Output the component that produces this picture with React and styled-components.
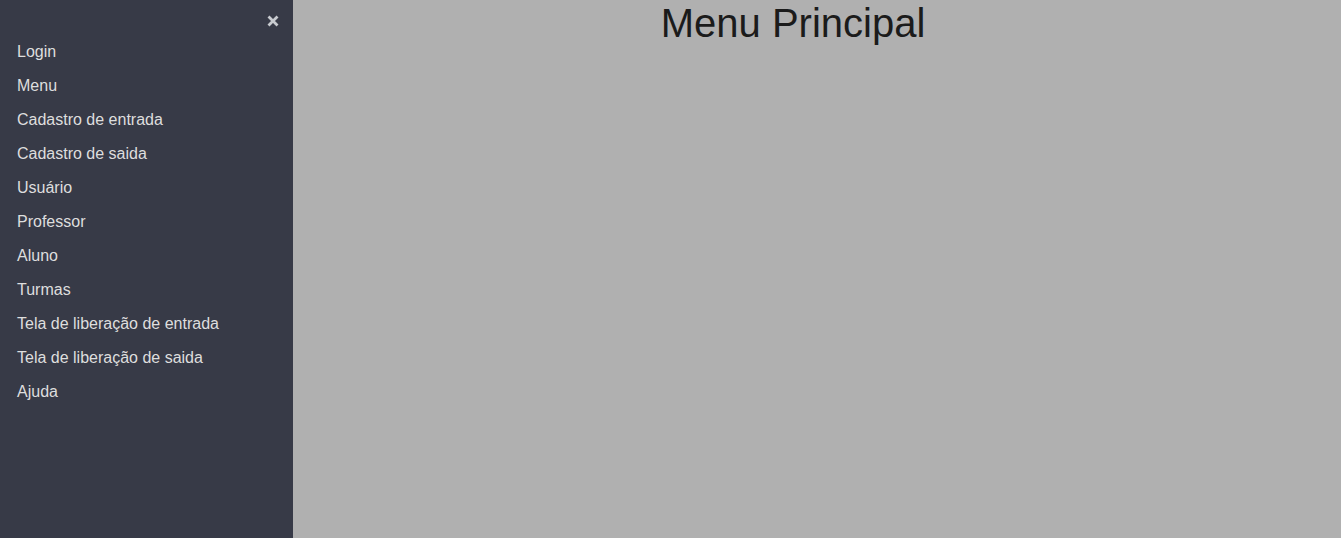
import React from "react";
import styled, { createGlobalStyle } from "styled-components";

const Global = createGlobalStyle`
  html, body { margin: 0; padding: 0; height: 100%; }
  body { font-family: "Liberation Sans", Arial, sans-serif; background: #b0b0b0; }
  #root { height: 100%; }
`;

const Layout = styled.div`
  display: flex;
  width: 100%;
  height: 538px;
  overflow: hidden;
`;

const Sidebar = styled.nav`
  width: 293px;
  flex: 0 0 293px;
  background: #373a47;
  display: flex;
  flex-direction: column;
`;

const SideHeader = styled.div`
  height: 35px;
  display: flex;
  justify-content: flex-end;
  align-items: flex-start;
  padding: 15px 14px 0 0;
  box-sizing: border-box;
`;

const CloseButton = styled.button`
  width: 12px;
  height: 12px;
  padding: 0;
  border: none;
  background: transparent;
  cursor: pointer;
  display: flex;
`;

const MenuList = styled.ul`
  list-style: none;
  margin: 0;
  padding: 0;
`;

const MenuItem = styled.li`
  padding: 8px 17px;
  line-height: 18px;
  font-size: 16px;
  color: #dedede;
  cursor: pointer;
`;

const Main = styled.main`
  flex: 1;
  background: #b0b0b0;
  padding-right: 48px;
`;

const Title = styled.h1`
  margin: 0;
  text-align: center;
  font-size: 40px;
  font-weight: 400;
  line-height: 46px;
  color: #1b1b1b;
`;

const items = [
  "Login",
  "Menu",
  "Cadastro de entrada",
  "Cadastro de saida",
  "Usuário",
  "Professor",
  "Aluno",
  "Turmas",
  "Tela de liberação de entrada",
  "Tela de liberação de saida",
  "Ajuda",
];

export default function App() {
  return (
    <>
      <Global />
      <Layout>
        <Sidebar>
          <SideHeader>
            <CloseButton aria-label="Fechar">
              <svg width="12" height="12" viewBox="0 0 12 12">
                <path d="M1.5 1.5 L10.5 10.5 M10.5 1.5 L1.5 10.5" stroke="#c8cbd0" strokeWidth="2.8" strokeLinecap="butt" />
              </svg>
            </CloseButton>
          </SideHeader>
          <MenuList>
            {items.map((t) => (
              <MenuItem key={t}>{t}</MenuItem>
            ))}
          </MenuList>
        </Sidebar>
        <Main>
          <Title>Menu Principal</Title>
        </Main>
      </Layout>
    </>
  );
}
